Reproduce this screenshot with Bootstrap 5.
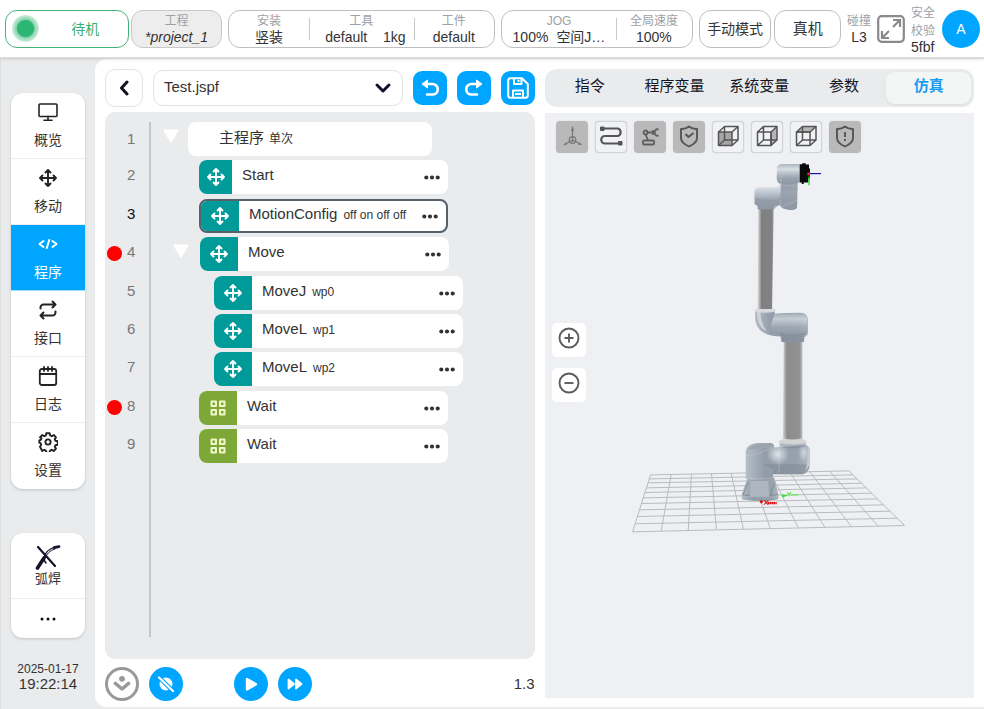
<!DOCTYPE html>
<html lang="zh-CN">
<head>
<meta charset="utf-8">
<meta name="viewport" content="width=device-width, initial-scale=1">
<title>Test.jspf</title>
<link href="https://cdn.jsdelivr.net/npm/bootstrap@5.3.0/dist/css/bootstrap.min.css" rel="stylesheet">
<style>
:root{--blue:#00a5ff;--panel:#e9ebed;--ink:#333;--muted:#9da1a6}
body{font-family:"Liberation Sans","Noto Sans CJK SC",sans-serif;font-size:15px;line-height:18px;color:var(--ink);background:var(--panel)}
button{font-family:inherit;color:inherit}
svg{display:block;flex:none}
/* top bar */
.topbar{height:58px;gap:6px;padding:0 4px 0 5px;background:#fff;border-bottom:1px solid #ddd;box-shadow:0 1px 3px rgba(0,0,0,.15);font-size:14px;line-height:16px;position:relative;z-index:2}
.pill{height:38px;border:1px solid #bfbfbf;border-radius:12px;background:#fff;padding:0;text-align:center}
.pill-status{flex:1 1 125px;border-color:#45b27b;color:#35b074;padding:0 29px 0 6px}
.pill-project{flex:1 1 91px;background:#ededed;border-color:#c8c8c8}
.status-dot{width:27px;height:27px;border-radius:50%;background:radial-gradient(circle,#2bb673 0 8px,#80d1aa 9px,#a8dfc4 11px,#d9f1e5 14px)}
.grow-a{flex:218 1 0;gap:2px}.grow-b{flex:267 1 0}.grow-c{flex:191 1 0}.grow-d{flex:143 1 0;gap:3px}
.cell{display:flex;flex-direction:column;justify-content:center;position:relative;white-space:nowrap}
.cell + .cell::before{content:"";position:absolute;left:0;top:7px;bottom:7px;width:1px;background:#c9c9c9}
.cap{display:block;font-size:12px;color:var(--muted)}
.w-81{flex:81 1 0}.w-105{flex:105 1 0}.w-114{flex:114 1 0}.w-76{flex:76 1 0}.w-73{flex:1 1 73px}.w-67{flex:1 1 67px;font-size:15px}
.safety{width:25px;line-height:14px}.safety .cap{line-height:18px}
.avatar-btn{width:38px;height:38px;border-radius:50%;background:var(--blue);color:#fff;border:0}
/* left navigation */
.sidebar{width:95px;padding:35px 10px 0 10px;border-left:1px solid #dcdddf;flex:none}
.side-card{background:#fff;border-radius:12px;overflow:hidden;box-shadow:0 1px 3px rgba(0,0,0,.18)}
.side-item{height:66px;display:flex;flex-direction:column;align-items:center;justify-content:center;gap:8px;color:var(--ink);text-decoration:none;font-size:14px;line-height:20px;border-bottom:1px solid #ececec}
.side-item svg{color:#222}
.side-item:last-child{border-bottom:0}
.side-item.active{background:var(--blue);color:#fff;border-color:#9fdcff}
.side-item.active svg{color:#fff}
.side-weld{margin-top:44px}
.side-weld .side-item{font-size:13px;line-height:18px;gap:0}
.side-weld .side-more{height:39px}
.clock{margin-top:25px;text-align:center}
.clock small{display:block;font-size:12px;line-height:12px}
.clock time{line-height:16px}
/* workspace */
.workspace{background:#fff;border-radius:12px 0 0 12px;margin-top:1px;margin-bottom:2px;padding:10px 10px 6px;gap:10px}
.half{flex:1 1 0;min-width:0;display:flex;flex-direction:column}
.bar{height:38px;gap:10px}
.back-btn{width:38px;height:38px;border:1px solid #e3e3e3;border-radius:10px;background:#fff;flex:none}
.file-select{height:36px;font-size:15px;border-color:#e3e3e3;border-radius:10px;color:var(--ink);padding:0 36px 2px 10px;background-size:18px 12px;background-position:right 10px center;--bs-form-select-bg-img:url("data:image/svg+xml,%3csvg xmlns='http://www.w3.org/2000/svg' viewBox='0 0 18 12'%3e%3cpath d='M3 3l6 6 6-6' fill='none' stroke='%23101028' stroke-width='3' stroke-linecap='round' stroke-linejoin='round'/%3e%3c/svg%3e")}
.tool-btn{width:34px;height:34px;border:0;border-radius:9px;background:var(--blue);color:#fff;padding:0;flex:none;display:flex;align-items:center;justify-content:center}
.round-btn{width:34px;height:34px;border-radius:50%}
.round-btn.idle{background:#fff;color:#999;border:3px solid #999}
.editor{background:var(--panel);border-radius:10px;margin-top:5px;padding:10px 0 22px;flex:1 1 auto}
.gutter{width:44px;padding-left:2px;color:#777}
.line-no{height:34px;margin-bottom:4px;padding-bottom:4px;display:flex;align-items:center;gap:5px}
.line-no:first-child{padding-bottom:0}
.line-no.push{margin-top:5px}
.line-no.current{color:#111}
.bp{width:15px;height:15px;border:0;border-radius:50%;padding:0;background:transparent;margin-top:2px}
.bp.on{background:#f00}
.tree{border-left:2px solid #c4c6c9}
.step{height:34px;margin-bottom:4px;display:flex;align-items:center;padding-left:48px}
.step.root{padding-left:12px;gap:9px}
.step.branch{padding-left:22px;gap:11px}
.step.push{margin-top:5px}
.nested{margin:5px 0}
.nested .step{padding-left:63px}
.fold{border:0;background:none;padding:0 0 6px;width:16px}
.node{height:34px;width:249px;background:#fff;border-radius:8px;overflow:hidden;display:flex;align-items:center;padding-right:8px}
.root .node{width:244px;padding:0 0 2px 31px}
.node-icon{align-self:stretch;width:38px;background:#009a99;color:#fff;display:flex;align-items:center;justify-content:center;flex:none}
.node-icon.slim{width:33px}
.node-icon.green{background:#7da838}
.node-name{flex:1 1 auto;padding:0 0 4px 10px;white-space:nowrap}
.node-name span,.root .node span{font-size:12px;margin-left:5px}
.node-name span{margin-left:6px}
.node.picked{border:2px solid #566069}
.more{border:0;background:none;padding:0;color:#333}
.foot{margin-top:8px;height:34px;gap:10px}
.run-group{margin-left:41px;gap:10px}
.tabs{height:38px;background:var(--panel);border-radius:12px;padding:3px}
.tabs .tab-btn{flex:1 1 0;border:0;border-radius:9px;background:none;padding:0 0 4px;color:#14141f}
.tabs .tab-btn.active{background:#f4f5f5;color:#1a9df0;font-weight:700;box-shadow:0 1px 3px rgba(0,0,0,.06)}
.scene{position:relative;flex:1 1 auto;margin-top:6px;background:#eef0f4;padding:8px 11px;margin-bottom:3px}
.scene-art{position:absolute;inset:0;width:100%;height:100%}
.view-tools{position:relative}
.view-btn{width:32px;height:32px;padding:0;border:1px solid #d3d4d6;border-radius:4px;background:#f0f2f5;color:#555;box-shadow:0 0 1px #bbb}
.view-btn.on{background:#b9b9b9;border-color:#b9b9b9}
.zoomers{position:absolute;left:7px;top:210px;display:flex;flex-direction:column;gap:11px}
.zoom-btn{width:34px;height:34px;border:0;border-radius:5px;background:#fff;padding:0 0 4px;display:flex;align-items:center;justify-content:center;color:#5c5c5c}
</style>
<script src="https://cdn.jsdelivr.net/npm/bootstrap@5.3.0/dist/js/bootstrap.bundle.min.js"></script>
</head>
<body class="d-flex flex-column min-vh-100">
<svg width="0" height="0" class="position-absolute" aria-hidden="true">
  <defs>
    <symbol id="move" viewBox="0 0 20 20"><path d="M10 2v16M2 10h16M7.500 4.500 10 2l2.500 2.500M7.500 15.500 10 18l2.500-2.500M4.500 7.500 2 10l2.500 2.500M15.500 7.500 18 10l-2.500 2.500" fill="none" stroke="currentColor" stroke-width="1.900" stroke-linecap="round" stroke-linejoin="round"/></symbol>
    <symbol id="grid4" viewBox="0 0 16 16"><path d="M1.500 1.500h4.500v4.500H1.500zM10 1.500h4.500v4.500H10zM1.500 10h4.500v4.500H1.500zM10 10h4.500v4.500H10z" fill="none" stroke="#f2f7c8" stroke-width="2" stroke-linejoin="round"/></symbol>
    <symbol id="dots" viewBox="0 0 16 5"><path d="M2.300 2.500h.01M8 2.500h.01M13.700 2.500h.01" stroke="currentColor" stroke-width="4.200" stroke-linecap="round"/></symbol>
    <symbol id="tri" viewBox="0 0 16 14"><path d="M1.500 1.500h13L8 12.500z" fill="#fff" stroke="#fff" stroke-width="2" stroke-linejoin="round"/></symbol>
  </defs>
</svg>

<header class="topbar d-flex align-items-center">
  <div class="grow-a d-flex">
    <button class="pill pill-status d-flex align-items-center justify-content-between"><span class="status-dot"></span><span>待机</span></button>
    <button class="pill pill-project"><span class="cap">工程</span><em>*project_1</em></button>
  </div>
  <div class="pill grow-b d-flex">
    <div class="cell w-81"><span class="cap">安装</span><span>竖装</span></div>
    <div class="cell w-105"><span class="cap">工具</span><span class="d-flex justify-content-between ps-3 pe-2"><span>default</span><span>1kg</span></span></div>
    <div class="cell w-81"><span class="cap">工件</span><span>default</span></div>
  </div>
  <div class="pill grow-c d-flex">
    <div class="cell w-114"><span class="cap">JOG</span><span class="d-flex justify-content-center gap-2"><span>100%</span><span>空间J…</span></span></div>
    <div class="cell w-76"><span class="cap">全局速度</span><span>100%</span></div>
  </div>
  <div class="grow-d d-flex">
    <button class="pill w-73">手动模式</button>
    <button class="pill w-67">真机</button>
  </div>
  <div class="text-center"><span class="cap">碰撞</span>L3</div>
  <button class="border-0 bg-transparent p-0" aria-label="全屏"><svg width="28" height="28" viewBox="0 0 28 28" fill="none" stroke="#8a8a8a" stroke-width="2.200"><rect x="1.200" y="1.200" width="25.600" height="25.600" rx="3.500"/><path d="M16 12 23 5M16 5h7v7M12 16 5 23M5 16v7h7"/></svg></button>
  <div class="safety"><span class="cap">安全<br>校验</span>5fbf</div>
  <button class="avatar-btn">A</button>
</header>

<div class="d-flex flex-grow-1">
  <aside class="sidebar">
    <nav class="side-card" aria-label="主菜单">
      <a href="#" class="side-item"><svg width="20" height="20" viewBox="0 0 20 20" fill="none" stroke="currentColor" stroke-width="1.600" stroke-linecap="round"><rect x="1" y="2" width="18" height="12.500" rx="1"/><path d="M10 14.500V18M6 18.200h8"/></svg>概览</a>
      <a href="#" class="side-item"><svg width="22" height="20"><use href="#move"/></svg>移动</a>
      <a href="#" class="side-item active" aria-current="page"><svg width="20" height="20" viewBox="0 0 20 20" fill="none" stroke="currentColor" stroke-width="2" stroke-linecap="round" stroke-linejoin="round"><path d="M5.500 7 1.500 10l4 3M14.500 7l4 3-4 3M11.200 6 8.800 14"/></svg>程序</a>
      <a href="#" class="side-item"><svg width="20" height="20" viewBox="0 0 20 20" fill="none" stroke="currentColor" stroke-width="2" stroke-linecap="round" stroke-linejoin="round"><path d="M2.500 8.500V7.500a3 3 0 0 1 3-3H17.500M14.500 1.500l3 3-3 3M17.500 11.500v1a3 3 0 0 1-3 3H2.500M5.500 12.500l-3 3 3 3"/></svg>接口</a>
      <a href="#" class="side-item"><svg width="20" height="20" viewBox="0 0 20 20" fill="none" stroke="currentColor" stroke-width="1.800" stroke-linecap="round"><rect x="1.800" y="3" width="16.400" height="16" rx="2"/><path d="M2 8h16M6 1v4M10 1v4M14 1v4"/></svg>日志</a>
      <a href="#" class="side-item"><svg width="20" height="20" viewBox="0 0 20 20" fill="none" stroke="currentColor" stroke-width="1.900" stroke-linejoin="round"><circle cx="10" cy="10" r="2.600"/><path d="M8.300 1.300h3.400l.5 2.200 1.500.7 2-1.200 2.300 2.300-1.200 2 .7 1.500 2.200.5v3.400l-2.200.5-.7 1.500 1.200 2-2.300 2.300-2-1.200-1.500.7-.5 2.200H8.300l-.5-2.200-1.500-.7-2 1.200L2 14.700l1.200-2-.7-1.500-1.200-.5V8.300l1.500-.5.700-1.500L2 5.300 4.300 3l2 1.200 1.500-.7z"/></svg>设置</a>
    </nav>
    <nav class="side-card side-weld" aria-label="工艺">
      <a href="#" class="side-item"><svg width="26" height="26" viewBox="0 0 26 26" fill="none" stroke="#14142a" stroke-linecap="round"><path d="M3 3 20 22" stroke-width="2.200"/><path d="M2.500 24 9 14" stroke-width="3.600"/><path d="M9 13C11 7 14 5 19 3.500" stroke-width="1.300"/><path d="M10 14c2-4 4-7 10-9" stroke-width="1"/><path d="M19 3.600 24 2.600" stroke-width="2.800"/><path d="M9 16l2 3" stroke-width="1.500"/></svg>弧焊</a>
      <a href="#" class="side-item side-more" aria-label="更多"><svg width="16" height="4" viewBox="0 0 16 4"><path d="M2 2h.01M8 2h.01M14 2h.01" stroke="#111" stroke-width="3" stroke-linecap="round"/></svg></a>
    </nav>
    <div class="clock"><small>2025-01-17</small><time>19:22:14</time></div>
  </aside>

  <main class="workspace d-flex flex-grow-1">
    <section class="half">
      <div class="bar d-flex align-items-center">
        <button class="back-btn d-flex align-items-center justify-content-center" aria-label="返回"><svg width="10" height="16" viewBox="0 0 10 16"><path d="M8 2 2.500 8 8 14" fill="none" stroke="#101028" stroke-width="3" stroke-linecap="round" stroke-linejoin="round"/></svg></button>
        <select class="form-select file-select" aria-label="程序文件"><option>Test.jspf</option></select>
        <button class="tool-btn" aria-label="撤销"><svg width="20" height="20" viewBox="0 -1 20 20"><path d="M6 5h6.500a5 5 0 0 1 0 10.500H7" fill="none" stroke="currentColor" stroke-width="2.600" stroke-linecap="round"/><path d="M7.500 1v8L2 5z" fill="currentColor" stroke="currentColor" stroke-linejoin="round"/></svg></button>
        <button class="tool-btn" aria-label="重做"><svg width="20" height="20" viewBox="0 -1 20 20"><path d="M14 5H7.500a5 5 0 0 0 0 10.500H13" fill="none" stroke="currentColor" stroke-width="2.600" stroke-linecap="round"/><path d="M12.500 1v8L18 5z" fill="currentColor" stroke="currentColor" stroke-linejoin="round"/></svg></button>
        <button class="tool-btn" aria-label="保存"><svg width="22" height="22" viewBox="0 0 22 22" fill="none" stroke="currentColor" stroke-width="2" stroke-linejoin="round"><path d="M3.500 1.200H15L20.800 7v11.500a2.300 2.300 0 0 1-2.300 2.300h-15a2.300 2.300 0 0 1-2.300-2.300v-15A2.300 2.300 0 0 1 3.500 1.200zM7 1.500v5.500h7.500V1.500M6 20.500v-7h10v7M8 17h6M11.500 3v2"/></svg></button>
      </div>

      <div class="editor d-flex">
        <div class="gutter">
          <div class="line-no"><button class="bp" aria-label="断点 1"></button>1</div>
          <div class="line-no"><button class="bp" aria-label="断点 2"></button>2</div>
          <div class="line-no push current"><button class="bp" aria-label="断点 3"></button>3</div>
          <div class="line-no"><button class="bp on" aria-label="断点 4"></button>4</div>
          <div class="line-no push"><button class="bp" aria-label="断点 5"></button>5</div>
          <div class="line-no"><button class="bp" aria-label="断点 6"></button>6</div>
          <div class="line-no"><button class="bp" aria-label="断点 7"></button>7</div>
          <div class="line-no push"><button class="bp on" aria-label="断点 8"></button>8</div>
          <div class="line-no"><button class="bp" aria-label="断点 9"></button>9</div>
        </div>
        <div class="tree flex-grow-1">
          <div class="step root"><button class="fold" aria-label="折叠"><svg width="16" height="14"><use href="#tri"/></svg></button><div class="node"><div>主程序<span>单次</span></div></div></div>
          <div class="step"><div class="node"><div class="node-icon slim"><svg width="20" height="20"><use href="#move"/></svg></div><div class="node-name">Start</div><button class="more" aria-label="更多"><svg width="16" height="5"><use href="#dots"/></svg></button></div></div>
          <div class="step push"><div class="node picked"><div class="node-icon"><svg width="20" height="20"><use href="#move"/></svg></div><div class="node-name">MotionConfig<span>off on off off</span></div><button class="more" aria-label="更多"><svg width="16" height="5"><use href="#dots"/></svg></button></div></div>
          <div class="step branch"><button class="fold" aria-label="折叠"><svg width="16" height="14"><use href="#tri"/></svg></button><div class="node"><div class="node-icon"><svg width="20" height="20"><use href="#move"/></svg></div><div class="node-name">Move</div><button class="more" aria-label="更多"><svg width="16" height="5"><use href="#dots"/></svg></button></div></div>
          <div class="nested">
            <div class="step"><div class="node"><div class="node-icon"><svg width="20" height="20"><use href="#move"/></svg></div><div class="node-name">MoveJ<span>wp0</span></div><button class="more" aria-label="更多"><svg width="16" height="5"><use href="#dots"/></svg></button></div></div>
            <div class="step"><div class="node"><div class="node-icon"><svg width="20" height="20"><use href="#move"/></svg></div><div class="node-name">MoveL<span>wp1</span></div><button class="more" aria-label="更多"><svg width="16" height="5"><use href="#dots"/></svg></button></div></div>
            <div class="step"><div class="node"><div class="node-icon"><svg width="20" height="20"><use href="#move"/></svg></div><div class="node-name">MoveL<span>wp2</span></div><button class="more" aria-label="更多"><svg width="16" height="5"><use href="#dots"/></svg></button></div></div>
          </div>
          <div class="step"><div class="node"><div class="node-icon green"><svg width="16" height="16"><use href="#grid4"/></svg></div><div class="node-name">Wait</div><button class="more" aria-label="更多"><svg width="16" height="5"><use href="#dots"/></svg></button></div></div>
          <div class="step"><div class="node"><div class="node-icon green"><svg width="16" height="16"><use href="#grid4"/></svg></div><div class="node-name">Wait</div><button class="more" aria-label="更多"><svg width="16" height="5"><use href="#dots"/></svg></button></div></div>
        </div>
      </div>

      <div class="foot d-flex align-items-center">
        <button class="tool-btn round-btn idle" aria-label="下载"><svg width="18" height="18" viewBox="0 0 18 18"><circle cx="9" cy="3.800" r="2.900" fill="currentColor"/><path d="M2.500 8.500 9 14l6.500-5.500" fill="none" stroke="currentColor" stroke-width="3.600" stroke-linecap="round" stroke-linejoin="round"/></svg></button>
        <button class="tool-btn round-btn" aria-label="断点禁用"><svg width="18" height="18" viewBox="0 0 18 18"><circle cx="9" cy="9" r="6.500" fill="#fff"/><path d="M2 2.500 16 16" stroke="#00a5ff" stroke-width="4.400"/><path d="M2 2.500 16 16" stroke="#fff" stroke-width="2.200" stroke-linecap="round"/></svg></button>
        <div class="run-group d-flex">
          <button class="tool-btn round-btn" aria-label="运行"><svg width="16" height="16" viewBox="0 0 16 16"><path d="M4 3v10.500l9-5.250z" fill="#fff" stroke="#fff" stroke-width="2.400" stroke-linejoin="round"/></svg></button>
          <button class="tool-btn round-btn" aria-label="单步"><svg width="16" height="14" viewBox="0 0 16 14"><path d="M1.500 2.500v9L7 7zM9 2.500v9L14.500 7z" fill="#fff" stroke="#fff" stroke-width="1.800" stroke-linejoin="round"/></svg></button>
        </div>
        <span class="ms-auto">1.3</span>
      </div>
    </section>

    <section class="half">
      <div class="tabs d-flex" role="tablist">
        <button class="tab-btn" role="tab">指令</button>
        <button class="tab-btn" role="tab">程序变量</button>
        <button class="tab-btn" role="tab">系统变量</button>
        <button class="tab-btn" role="tab">参数</button>
        <button class="tab-btn active" role="tab" aria-selected="true">仿真</button>
      </div>
      <div class="scene">
        <svg class="scene-art" viewBox="545 113 430 585" preserveAspectRatio="xMidYMin meet" role="img" aria-label="机器人仿真">
          <defs>
            <linearGradient id="metalV" x1="0" y1="0" x2="0" y2="1"><stop offset="0" stop-color="#aab3bd"/><stop offset=".25" stop-color="#d9dfe5"/><stop offset=".6" stop-color="#a3adb8"/><stop offset="1" stop-color="#8b95a1"/></linearGradient>
            <linearGradient id="metalH" x1="0" y1="0" x2="1" y2="0"><stop offset="0" stop-color="#b4bdc7"/><stop offset=".3" stop-color="#939daa"/><stop offset=".8" stop-color="#98a2ae"/><stop offset="1" stop-color="#aeb7c1"/></linearGradient>
            <linearGradient id="tube" x1="0" y1="0" x2="1" y2="0"><stop offset="0" stop-color="#d6d6d6"/><stop offset=".15" stop-color="#a9a9a9"/><stop offset=".22" stop-color="#808080"/><stop offset=".9" stop-color="#828282"/><stop offset="1" stop-color="#b0b0b0"/></linearGradient>
            <linearGradient id="tube2" x1="0" y1="0" x2="1" y2="0"><stop offset="0" stop-color="#d0d0d0"/><stop offset=".2" stop-color="#8c8c8c"/><stop offset=".85" stop-color="#929292"/><stop offset="1" stop-color="#bbb"/></linearGradient>
            <radialGradient id="shine"><stop offset="0" stop-color="#f2f5f8"/><stop offset="1" stop-color="#f2f5f8" stop-opacity="0"/></radialGradient>
          </defs>
          <g transform="translate(620 340) scale(.3333)">
            <path fill="none" stroke="#b9bbbe" stroke-width="3" d="M92 406 688 394M88 418 700 406M84 430 712 418M80 445 726 431M75 459 740 445M70 475 756 461M65 492 774 478M59 511 792 496M53 531 811 515M46 553 833 536M38 577 855 558M92 406 38 577M154 405 124 575M215 404 205 573M275 402 290 571M334 401 371 569M393 400 452 567M452 399 536 565M511 398 616 564M570 396 696 562M630 395 776 560M688 394 855 558"/>
            <!-- base, shoulder and upper arm -->
            <path fill="url(#metalH)" d="M384 415h80l12 50v12q-50 12-110 0v-14z"/>
            <path fill="#aeb7c1" d="M392 424h54l2 48h-58z"/>
            <path fill="none" stroke="#717b87" stroke-width="2" d="M384 430 370 466 390 468M464 430 452 468 474 464M368 478q50 10 106 0"/>
            <path fill="url(#metalH)" d="M378 418V335q2-20 30-24l45-1q12 2 10 14l18-2 80-6 9 10v56q-5 18-20 22H460v16q-40 6-82-2z"/>
            <path fill="#7f8995" d="M430 374h138v12q-5 15-20 18H460v-14z" opacity=".55"/>
            <path fill="none" stroke="#cbd3db" stroke-width="2" stroke-dasharray="4 3" d="M380 348q46-4 78-28M478 318v82M380 415q40 6 80 0"/>
            <path fill="#9ba5b0" d="M384 330q15-20 72-17 6 10-22 13-30 2-50 4z"/>
            <ellipse cx="474" cy="344" rx="34" ry="32" fill="url(#shine)" opacity=".8"/>
            <ellipse cx="552" cy="340" rx="16" ry="28" fill="url(#shine)" opacity=".55"/>
            <path fill="#c3cad2" d="M564 320q8 6 6 56l-12 18q8-44 6-74z"/>
            <path fill="#7f8995" d="M480 306h78v14q-40 14-78 0z" opacity=".55"/>
            <path fill="#d3d4d5" d="M478 304 492 296h54l14 8v6q-40 8-82 0z"/>
            <path fill="url(#tube2)" d="M492 2h56v294q-28 8-58 0z"/>
            <path fill="#dd1111" d="M419 487l6-6 6 6-6 6zM432 482l5 0 3 5 4-5h4l-6 7 5 7h-4l-4-5-4 5h-4l6-7z"/>
            <path d="M444 491h27" stroke="#dd1111" stroke-width="7" stroke-dasharray="5 1"/>
            <path fill="#39e339" d="M486 464l20 4-18 6z"/><path fill="none" stroke="#65ef4c" stroke-width="4" d="M502 459l7 6 5-7M509 465v5M514 466h22"/>
          </g>
          <g transform="translate(720 150) scale(.3333)">
            <!-- elbow, forearm and wrist -->
            <path fill="url(#metalH)" d="M106 478h59v14q70-4 86-2 14 6 14 24v34q-2 12-12 14v14q-34 6-68 0v-16q-34 0-54-12-25-14-25-44z"/>
            <path fill="url(#metalV)" d="M165 493q70-4 84-1 14 5 14 24v38q-50 6-84 0-20-8-28-24z" opacity=".7"/>
            <path fill="#7f8995" d="M180 548q40 10 76 2l-3 26q-34 6-68 0z" opacity=".6"/>
            <path fill="#d5dbe1" d="M112 484q-2 42 24 58 8 4 0-6-14-20-14-52z" opacity=".8"/>
            <path fill="#d9dadb" d="M106 478q30-6 59 0v8q-30 6-59 0z"/>
            <path fill="url(#tube)" d="M116 172h46l-5 306h-43z"/>
            <path fill="url(#metalV)" d="M104 124q2-12 14-13h46q16 2 22-14V90h46v84q-6 8-22 6-24-2-30-14l-18 2v10h-48v-10l-10-6z"/>
            <path fill="#8f99a5" d="M184 96h49v64q0 20-20 20-22-2-29-14l-14-4q14-24 14-66z" opacity=".75"/>
            <path fill="#8f99a5" d="M108 144q30 8 72 4l-6 20-12 10h-48v-10l-9-6z" opacity=".7"/>
            <path fill="url(#metalV)" d="M172 52q4-10 14-10h54v55q-20 10-54 6-14-2-15-18z"/>
            <path fill="#8f99a5" d="M184 84h50v38h-50z" opacity=".5"/>
            <path fill="none" stroke="#c5ccd4" stroke-width="2" stroke-dasharray="5 4" d="M184 43v60M182 106h48M182 114v52M186 170l46-18"/>
            <path fill="#0a0a0a" d="M240 43h8v-3h10v4h10v12h3v30h-5v12h-14v4h-6v-4h-6z"/>
            <path stroke="#1515aa" stroke-width="3.500" d="M270 71h34"/><path stroke="#1de01d" stroke-width="4" d="M268 80v26"/><path fill="#f22" d="M263 68h8v8h-8z"/>
          </g>
        </svg>
        <div class="view-tools w-75 d-flex justify-content-between">
          <button class="view-btn on" aria-label="坐标系"><svg width="30" height="30" viewBox="0 0 30 30" fill="none" stroke="#777" stroke-width="1.200"><path d="M15.500 5v15M15.500 18l-8 4.500M15.500 18l9 4.500"/><circle cx="15.500" cy="18" r="3.300"/><path fill="#777" stroke="none" d="M15.500 4l1.500 5h-3zM6 23.500l3-3 1 2zM25 23.500l-4-1 1-2z"/></svg></button>
          <button class="view-btn" aria-label="轨迹"><svg width="30" height="30" viewBox="0 0 30 30" fill="none" stroke="currentColor" stroke-width="2.200"><path d="M6 6.500h16a4 4 0 0 1 0 7.500H9a3.500 3.500 0 0 0 0 7.500h15"/><path fill="currentColor" stroke-width="1" d="M4.500 5h3.500v3.500H4.500zM22.500 19.500H26V23h-3.500z"/></svg></button>
          <button class="view-btn on" aria-label="机械臂"><svg width="30" height="30" viewBox="0 0 30 30" fill="none" stroke="#5e5e5e" stroke-width="1.800"><rect x="8" y="18.500" width="11" height="4" rx="1"/><path d="M12 10.500h6M23.500 7.500c-5-2-5 8 0 6M10.500 12l2.500 6.500"/><circle cx="10.500" cy="10.500" r="2"/><path d="M18 8v5"/></svg></button>
          <button class="view-btn on" aria-label="安全"><svg width="30" height="30" viewBox="0 0 30 30" fill="none" stroke="currentColor" stroke-width="1.900" stroke-linejoin="round"><path d="M15 4.500q4 3 8 2.500v9q0 5-8 8.500-8-3.500-8-8.500V7q4 .5 8-2.500zM11.500 12l3 3 5-4"/></svg></button>
          <button class="view-btn" aria-label="前视图"><svg width="30" height="30" viewBox="0 0 30 30" fill="none" stroke="currentColor" stroke-width="1.500" stroke-linejoin="round"><path fill="#a6a6a6" d="M5.500 10h13.500v13.500H5.500z"/><path d="M5.500 10l6-5.500h13.500V18L19 23.500M19 10l6-5.500M11.500 4.500V18H25M5.500 23.500l6-5.500"/></svg></button>
          <button class="view-btn" aria-label="侧视图"><svg width="30" height="30" viewBox="0 0 30 30" fill="none" stroke="currentColor" stroke-width="1.500" stroke-linejoin="round"><path fill="#b5b5b5" d="M19 10l6-5.500V18l-6 5.500z"/><path d="M5.500 10H19v13.500H5.500zM5.500 10l6-5.500H25M11.500 4.500V18H25M5.500 23.500l6-5.500"/></svg></button>
          <button class="view-btn" aria-label="顶视图"><svg width="30" height="30" viewBox="0 0 30 30" fill="none" stroke="currentColor" stroke-width="1.500" stroke-linejoin="round"><path fill="#b5b5b5" d="M5.500 10l6-5.500H25L19 10z"/><path d="M5.500 10H19v13.500H5.500zM25 4.500V18l-6 5.500M11.500 4.500V18H25M5.500 23.500l6-5.500"/></svg></button>
          <button class="view-btn on" aria-label="警告"><svg width="30" height="30" viewBox="0 0 30 30" fill="none" stroke="currentColor" stroke-width="1.900" stroke-linejoin="round"><path d="M15 4.500q4 3 8 2.500v9q0 5-8 8.500-8-3.500-8-8.500V7q4 .5 8-2.500zM15 10v5M15 17v2"/></svg></button>
        </div>
        <div class="zoomers">
          <button class="zoom-btn" aria-label="放大"><svg width="22" height="22" viewBox="0 0 22 22" fill="none" stroke="currentColor" stroke-width="1.900"><circle cx="11" cy="11" r="9.500"/><path d="M6.500 11h9M11 6.500v9"/></svg></button>
          <button class="zoom-btn" aria-label="缩小"><svg width="22" height="22" viewBox="0 0 22 22" fill="none" stroke="currentColor" stroke-width="1.900"><circle cx="11" cy="11" r="9.500"/><path d="M6.500 11h9"/></svg></button>
        </div>
      </div>
    </section>
  </main>
</div>
</body>
</html>
